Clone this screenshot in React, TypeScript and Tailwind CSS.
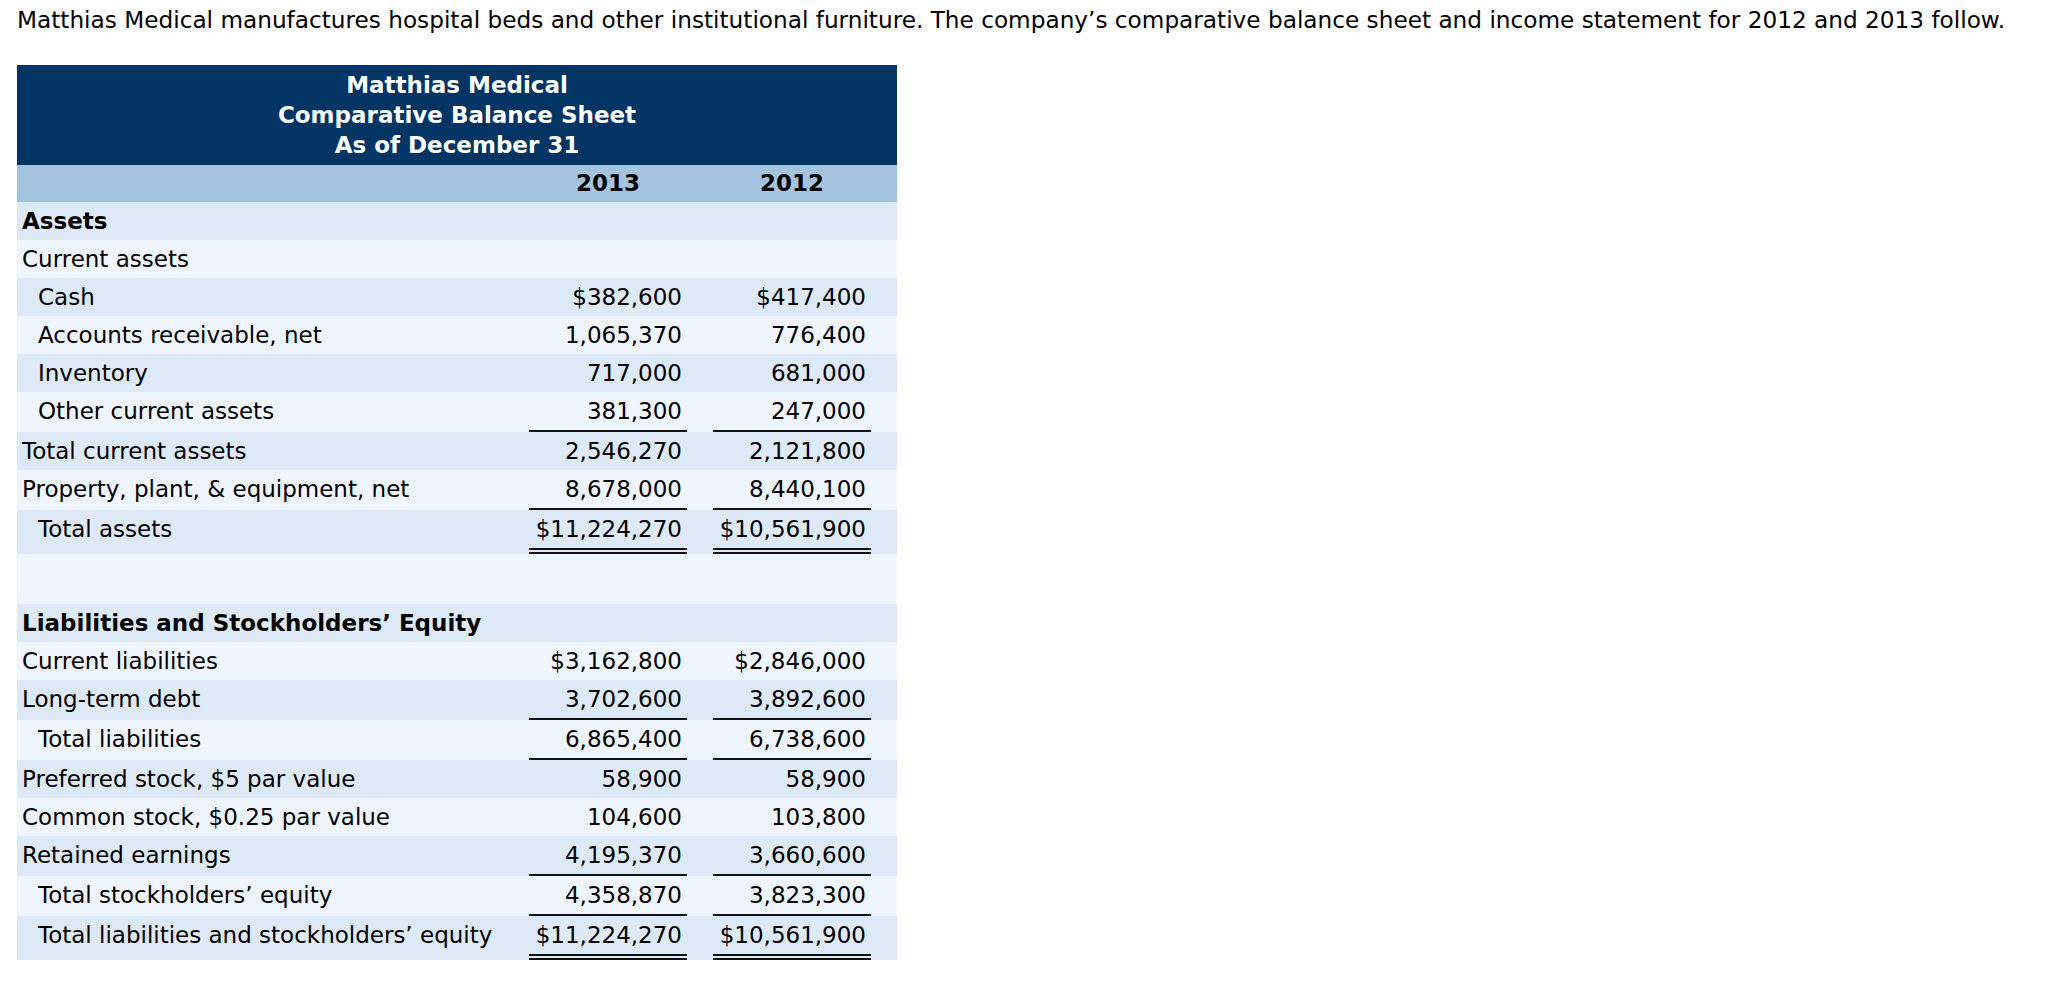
import React from 'react';

type Line = 'none' | 'single' | 'double';

type Row = {
    label: string;
    indent?: boolean;
    bold?: boolean;
    v13?: string;
    v12?: string;
    line?: Line;
    spacer?: boolean;
};

// Balance sheet rows, top to bottom
const ROWS: Row[] = [
    { label: 'Assets', bold: true },
    { label: 'Current assets' },
    { label: 'Cash', indent: true, v13: '$382,600', v12: '$417,400' },
    { label: 'Accounts receivable, net', indent: true, v13: '1,065,370', v12: '776,400' },
    { label: 'Inventory', indent: true, v13: '717,000', v12: '681,000' },
    { label: 'Other current assets', indent: true, v13: '381,300', v12: '247,000', line: 'single' },
    { label: 'Total current assets', v13: '2,546,270', v12: '2,121,800' },
    { label: 'Property, plant, & equipment, net', v13: '8,678,000', v12: '8,440,100', line: 'single' },
    { label: 'Total assets', indent: true, v13: '$11,224,270', v12: '$10,561,900', line: 'double' },
    { label: '', spacer: true },
    { label: 'Liabilities and Stockholders\u2019 Equity', bold: true },
    { label: 'Current liabilities', v13: '$3,162,800', v12: '$2,846,000' },
    { label: 'Long-term debt', v13: '3,702,600', v12: '3,892,600', line: 'single' },
    { label: 'Total liabilities', indent: true, v13: '6,865,400', v12: '6,738,600', line: 'single' },
    { label: 'Preferred stock, $5 par value', v13: '58,900', v12: '58,900' },
    { label: 'Common stock, $0.25 par value', v13: '104,600', v12: '103,800' },
    { label: 'Retained earnings', v13: '4,195,370', v12: '3,660,600', line: 'single' },
    { label: 'Total stockholders\u2019 equity', indent: true, v13: '4,358,870', v12: '3,823,300', line: 'single' },
    { label: 'Total liabilities and stockholders\u2019 equity', indent: true, v13: '$11,224,270', v12: '$10,561,900', line: 'double' },
];

function ValueCell({ value, line }: { value?: string; line: Line }) {
    const border =
        line === 'single'
            ? 'border-b-2 border-[#111]'
            : line === 'double'
              ? 'border-b-[6px] border-double border-[#111]'
              : '';
    return (
        <div className="px-[13px]">
            <div className={`box-content h-[38px] flex items-center justify-end pr-[5px] whitespace-nowrap ${border}`}>
                {value}
            </div>
        </div>
    );
}

export default function App() {
    return (
        <div className="min-h-screen bg-white text-black font-['DejaVu_Sans',Verdana,sans-serif]">
            <p className="pt-[7px] pl-[17px] text-[23.2px] leading-[26px] whitespace-nowrap">
                Matthias Medical manufactures hospital beds and other institutional furniture. The company’s comparative balance sheet and income statement for 2012 and 2013 follow.
            </p>

            <div className="mt-[32px] ml-[17px] w-[880px] text-[23px]">
                {/* Title block */}
                <div className="h-[100px] bg-[#023464] pt-[5px] text-center font-bold text-white leading-[30px]">
                    <div>Matthias Medical</div>
                    <div>Comparative Balance Sheet</div>
                    <div>As of December 31</div>
                </div>

                {/* Year header */}
                <div className="grid grid-cols-[1fr_184px_184px] pr-[13px] h-[37px] bg-[#a4c3de] font-bold">
                    <div />
                    <div className="px-[13px] flex items-center justify-center">2013</div>
                    <div className="px-[13px] flex items-center justify-center">2012</div>
                </div>

                {ROWS.map((row, i) => {
                    const bg = i % 2 === 0 ? 'bg-[#dee9f8]' : 'bg-[#eef5fe]';
                    if (row.spacer) {
                        return <div key={i} className={`h-[50px] ${bg}`} />;
                    }
                    return (
                        <div key={i} className={`grid grid-cols-[1fr_184px_184px] pr-[13px] ${bg}`}>
                            <div
                                className={`h-[38px] flex items-center whitespace-nowrap ${row.indent ? 'pl-[21px]' : 'pl-[5px]'} ${row.bold ? 'font-bold' : ''}`}
                            >
                                {row.label}
                            </div>
                            <ValueCell value={row.v13} line={row.line ?? 'none'} />
                            <ValueCell value={row.v12} line={row.line ?? 'none'} />
                        </div>
                    );
                })}
            </div>
        </div>
    );
}
